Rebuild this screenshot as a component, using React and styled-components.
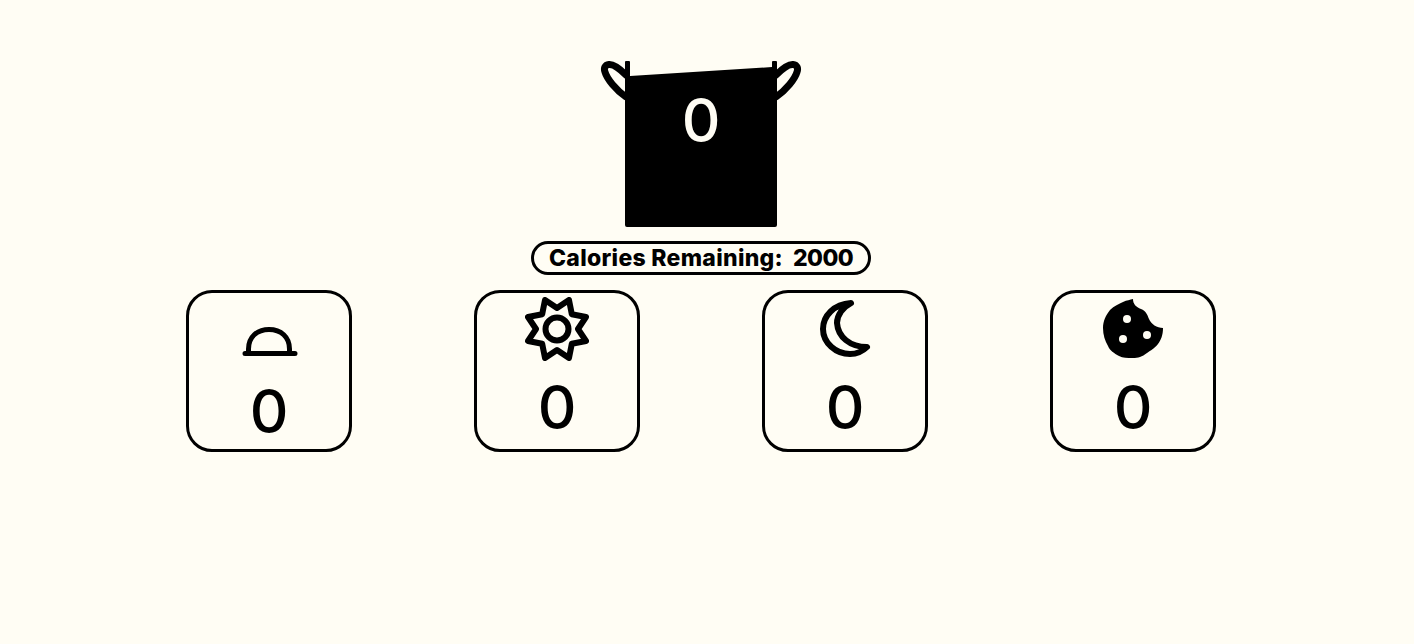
import React from 'react';
import styled, { createGlobalStyle } from 'styled-components';

const GlobalStyle = createGlobalStyle`
  body {
    margin: 0;
    background: #fffdf4;
    color: #000;
    font-family: Inter, "Liberation Sans", sans-serif;
  }
`;

const meals = [
  { id: 'breakfast', Icon: DomeIcon, count: 0 },
  { id: 'lunch', Icon: SunIcon, count: 0 },
  { id: 'dinner', Icon: MoonIcon, count: 0 },
  { id: 'snack', Icon: CookieIcon, count: 0 },
];

function PotIcon() {
  return (
    <svg width="202" height="170" viewBox="0 0 202 170">
      <path
        d="M26 17 C20 11 14 6 9 6.5 C5 7 3.5 10 5 14 C7 21 16 32 26 39"
        fill="none"
        stroke="#000"
        strokeWidth="7"
        strokeLinecap="round"
      />
      <path
        d="M176 17 C182 11 188 6 193 6.5 C197 7 198.5 10 197 14 C195 21 186 32 176 39"
        fill="none"
        stroke="#000"
        strokeWidth="7"
        strokeLinecap="round"
      />
      <path
        d="M25 4 Q25 3 26 3 H29 Q30 3 30 4 V18 L172 9 V4 Q172 3 173 3 H176 Q177 3 177 4 V167 Q177 169 175 169 H27 Q25 169 25 167 Z"
        fill="#000"
      />
    </svg>
  );
}

function DomeIcon() {
  return (
    <svg width="64" height="68" viewBox="0 0 64 68">
      <path
        d="M11.5 54 V52 C11.5 40 20 32.5 32 32.5 C44 32.5 52.5 40 52.5 52 V54 M8 56.5 H58"
        fill="none"
        stroke="#000"
        strokeWidth="5"
        strokeLinecap="round"
      />
    </svg>
  );
}

function SunIcon() {
  return (
    <svg width="64" height="64" viewBox="0 0 64 64">
      <polygon
        points="32,11 44,3 46.8,17.2 61,20 53,32 61,44 46.8,46.8 44,61 32,53 20,61 17.2,46.8 3,44 11,32 3,20 17.2,17.2 20,3"
        fill="none"
        stroke="#000"
        strokeWidth="6"
        strokeLinejoin="round"
      />
      <circle cx="32" cy="32" r="11.5" fill="none" stroke="#000" strokeWidth="6" />
    </svg>
  );
}

function MoonIcon() {
  return (
    <svg width="64" height="64" viewBox="0 0 64 64">
      <path
        d="M38 6 C21 7 10 19 10 32 C10 46 23 57 37 57 C44 57 50 54 54 50 C37 50 25 40 24 26 C24 18 30 10 38 6 Z"
        fill="none"
        stroke="#000"
        strokeWidth="6"
        strokeLinejoin="round"
      />
    </svg>
  );
}

function CookieIcon() {
  return (
    <svg width="64" height="64" viewBox="0 0 64 64">
      <path
        d="M32 2 C32 7 35 10 40 12 C45 14 46 17 48 22 C50 27 56 31 62 31 C62 38 60 43 57 47 C53 52 50 53 46 56 C41 60 37 61 32 61 C26 61 22 61 18 59 C13 56 9 54 7 49 C4 44 2 38 2 31 C2 24 5 18 9 13 C13 9 18 7 22 5 C26 3 29 3 32 2 Z"
        fill="#000"
      />
      <circle cx="26" cy="22" r="4" fill="#fffdf4" />
      <circle cx="46" cy="38" r="4" fill="#fffdf4" />
      <circle cx="22" cy="42" r="4" fill="#fffdf4" />
    </svg>
  );
}

const App = () => (
  <Page>
    <GlobalStyle />
    <Pot>
      <PotIcon />
      <PotCount>0</PotCount>
    </Pot>
    <Remaining>
      <RemainingLabel>Calories Remaining:</RemainingLabel>
      <RemainingValue>2000</RemainingValue>
    </Remaining>
    <MealRow>
      {meals.map(({ id, Icon, count }) => (
        <MealCard key={id}>
          <Icon />
          <MealCount>{count}</MealCount>
        </MealCard>
      ))}
    </MealRow>
  </Page>
);

const Page = styled.main`
  display: flex;
  flex-direction: column;
  align-items: center;
  box-sizing: border-box;
  height: 644px;
  padding: 58px 12px 0 0;
`;

const Pot = styled.div`
  position: relative;
  width: 202px;
  height: 170px;

  svg {
    display: block;
  }
`;

const PotCount = styled.span`
  position: absolute;
  top: 26px;
  left: 0;
  right: 0;
  text-align: center;
  font-size: 60px;
  font-weight: 450;
  line-height: 72px;
  color: #fffdf4;
`;

const Remaining = styled.div`
  display: flex;
  justify-content: center;
  align-items: center;
  gap: 10px;
  box-sizing: border-box;
  width: 340px;
  height: 34px;
  margin-top: 13px;
  border: 3px solid #000;
  border-radius: 17px;
  font-size: 23px;
  font-weight: 800;
`;

const RemainingLabel = styled.span`
  letter-spacing: 0.3px;
`;

const RemainingValue = styled.span`
  letter-spacing: -0.6px;
`;

const MealRow = styled.div`
  display: flex;
  gap: 122px;
  margin-top: 15px;
`;

const MealCard = styled.div`
  display: flex;
  flex-direction: column;
  align-items: center;
  box-sizing: border-box;
  width: 166px;
  height: 162px;
  padding-top: 4px;
  border: 3px solid #000;
  border-radius: 26px;

  svg {
    display: block;
  }
`;

const MealCount = styled.span`
  margin-top: 10px;
  font-size: 60px;
  font-weight: 450;
  line-height: 72px;
`;

export default App;
